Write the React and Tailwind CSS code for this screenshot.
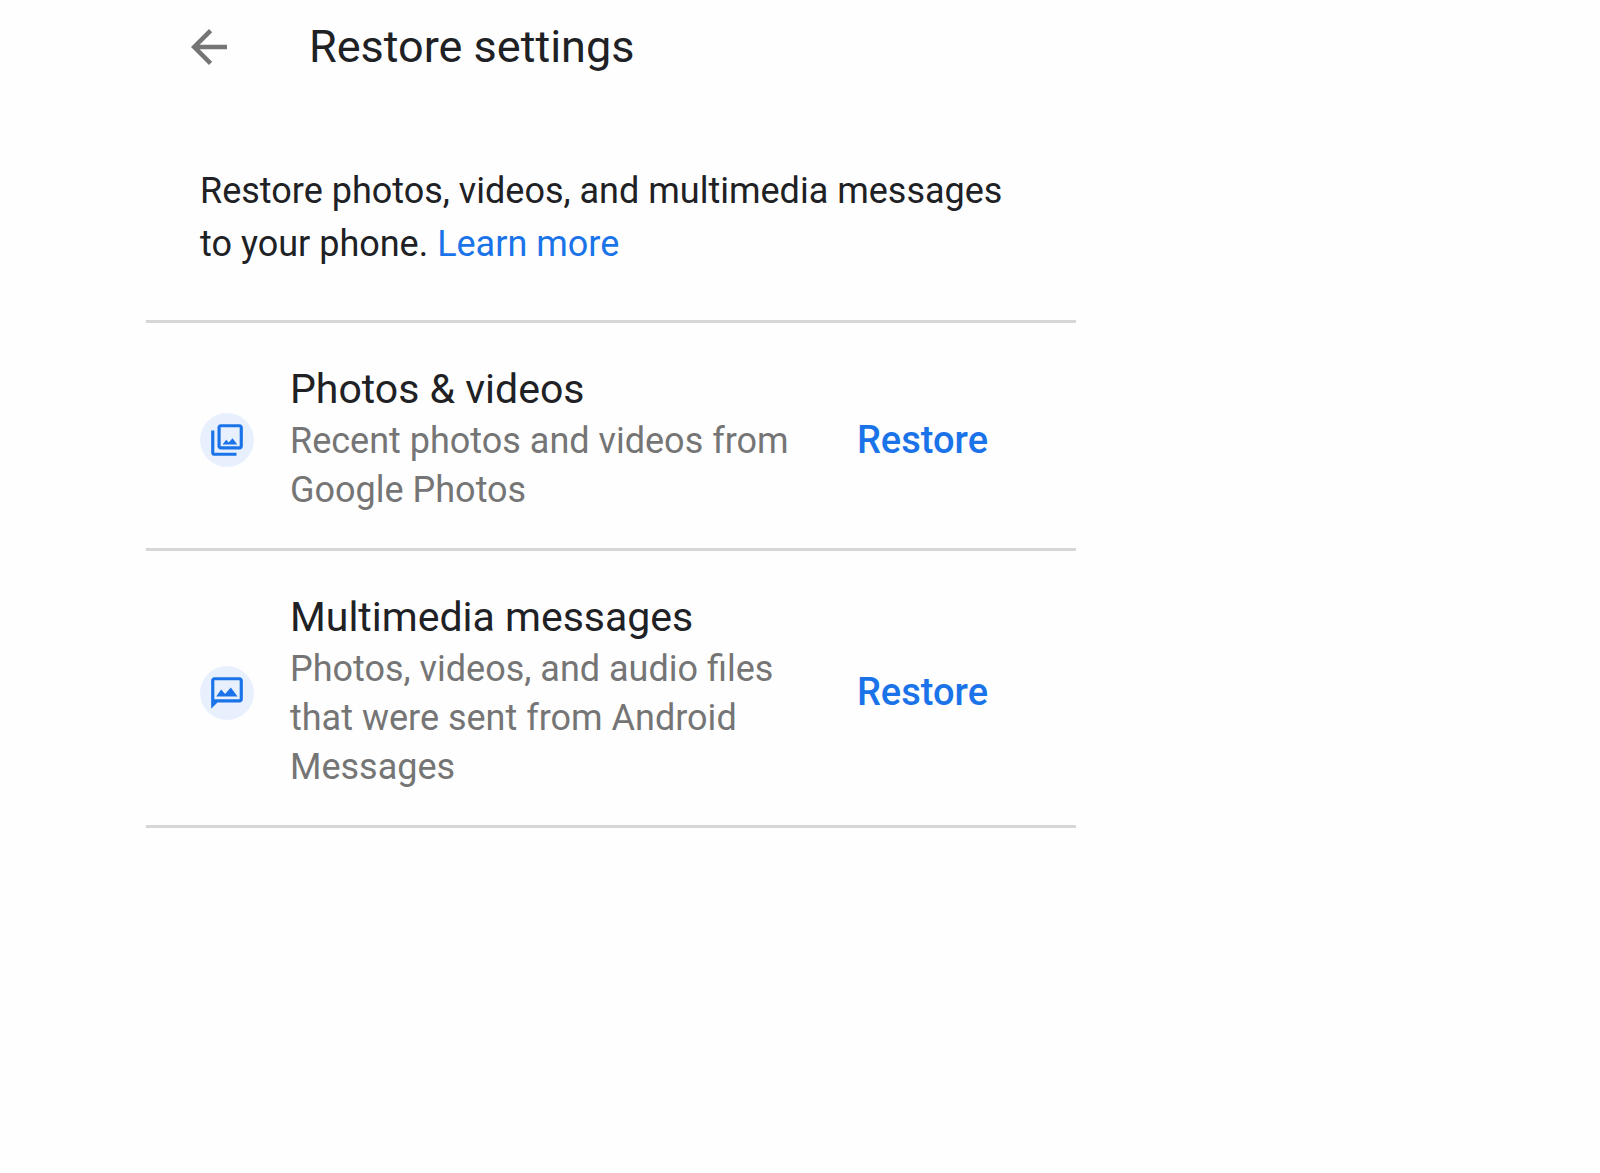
import React from "react";

const ArrowBackIcon = () => (
  <svg viewBox="0 0 24 24" className="w-[54px] h-[54px]" fill="currentColor" aria-hidden="true">
    <path d="M20 11H7.83l5.59-5.59L12 4l-8 8 8 8 1.41-1.41L7.83 13H20v-2z" />
  </svg>
);

const PhotoLibraryIcon = () => (
  <svg viewBox="0 0 24 24" className="w-[38px] h-[38px]" fill="currentColor" aria-hidden="true">
    <path d="M20 4v12H8V4h12m0-2H8c-1.1 0-2 .9-2 2v12c0 1.1.9 2 2 2h12c1.1 0 2-.9 2-2V4c0-1.1-.9-2-2-2z" />
    <path d="M2 6v14c0 1.1.9 2 2 2h14v-2H4V6H2z" />
    <path d="M9.2 14.9l2.3-3 1.6 1.6 2.4-2.6 3 4z" />
  </svg>
);

const PhotoMessageIcon = () => (
  <svg viewBox="0 0 24 24" className="w-[38px] h-[38px]" fill="currentColor" aria-hidden="true">
    <path d="M20 2H4c-1.1 0-2 .9-2 2v18l4-4h14c1.1 0 2-.9 2-2V4c0-1.1-.9-2-2-2zm0 14H4V4h16v12z" />
    <path d="M5.2 14.2l3.1-4.4 2.5 2.8 3.6-4.1 4.3 5.7z" />
  </svg>
);

const items = [
  {
    id: "photos",
    title: "Photos & videos",
    description: "Recent photos and videos from Google Photos",
    Icon: PhotoLibraryIcon,
  },
  {
    id: "messages",
    title: "Multimedia messages",
    description: "Photos, videos, and audio files that were sent from Android Messages",
    Icon: PhotoMessageIcon,
  },
];

const RestoreItem = ({ title, description, Icon }) => (
  <li className="flex items-center pl-[54px] pr-[88px] pt-[42px] pb-[33px] border-b-3 border-[#d6d6d6]">
    <span className="flex items-center justify-center shrink-0 w-[54px] h-[54px] rounded-full bg-[#e8f0fe] text-[#1a73e8]">
      <Icon />
    </span>
    <div className="flex-1 pl-9 pr-12">
      <h2 className="text-[41px] leading-[48px] text-[#202124]">{title}</h2>
      <p className="mt-1 text-[36px] leading-[49px] text-[#757575]">{description}</p>
    </div>
    <button
      type="button"
      aria-label={`Restore ${title}`}
      className="shrink-0 text-[38px] leading-[49px] font-medium text-[#1a73e8] cursor-pointer"
    >
      Restore
    </button>
  </li>
);

const App = () => {
  return (
    <div className="min-h-screen bg-[#fefefe] font-['Roboto',sans-serif]">
      <main className="max-w-[1076px] pl-[146px]">
        <header className="flex items-center pt-5 pl-9">
          <button type="button" aria-label="Back" className="text-[#757575] cursor-pointer">
            <ArrowBackIcon />
          </button>
          <h1 className="ml-[73px] text-[45px] leading-[54px] text-[#202124]">Restore settings</h1>
        </header>

        <p className="mt-[91px] pl-[54px] pr-14 pb-[49px] text-[36px] leading-[53px] text-[#202124] border-b-3 border-[#d6d6d6]">
          Restore photos, videos, and multimedia messages to your phone.{" "}
          <a href="#learn-more" className="text-[#1a73e8]">
            Learn more
          </a>
        </p>

        <ul>
          {items.map((item) => (
            <RestoreItem key={item.id} {...item} />
          ))}
        </ul>
      </main>
    </div>
  );
};

export default App;
